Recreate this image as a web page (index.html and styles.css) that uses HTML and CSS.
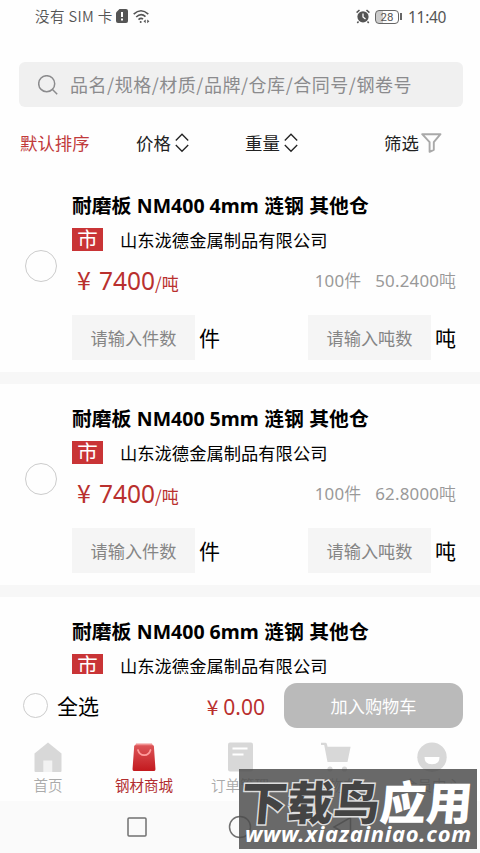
FILE: index.html
```html
<!DOCTYPE html>
<html lang="zh-CN">
<head>
<meta charset="utf-8">
<title>钢材商城</title>
<link rel="stylesheet" href="styles.css">
</head>
<body>
<div class="screen">
  <header class="status">
    <span class="sim">没有 SIM 卡</span>
    <svg class="sim-icon" width="12" height="16" viewBox="0 0 12 16"><path fill="#555" d="M3.500 1H10a2 2 0 0 1 2 2v10a2 2 0 0 1-2 2H2a2 2 0 0 1-2-2V4.500z"/><path stroke="#fff" stroke-width="2" d="M6 4v5M6 10.500v2"/></svg>
    <svg class="wifi" width="17" height="16" viewBox="0 0 17 16" fill="none" stroke="#555" stroke-width="1.600"><path d="M.7 5.200Q8 -1.700 15.300 5.200M3.200 8Q8 3.600 12.500 7.600M5.500 10.600Q8 8.400 10 10.200"/><circle cx="7.700" cy="13" r="1" fill="#555" stroke="none"/><path fill="#555" stroke="none" d="M10.500 12.300l2.200-1.900v3.800zM16.400 12.300l-2.200-1.900v3.800z"/></svg>
    <span class="grow"></span>
    <svg class="alarm" width="14" height="15" viewBox="0 0 14 15"><circle cx="7" cy="7.800" r="5.600" fill="#555"/><path fill="none" stroke="#555" stroke-width="1.500" d="M.6 3.600L3.500 1M13.400 3.600L10.500 1M2.500 12.500L1.300 14M11.500 12.500l1.200 1.500"/><path fill="none" stroke="#fff" stroke-width="1.300" d="M7 4.500V8l2.500 2"/></svg>
    <span class="battery">28</span>
    <span class="battery-tip"></span>
    <span class="clock">11:40</span>
  </header>

  <div class="search">
    <svg width="20" height="20" viewBox="0 0 20 20" fill="none" stroke="#8b8b8d" stroke-width="1.500"><circle cx="8.700" cy="8.700" r="8"/><path d="M14.500 14.500l4.700 4.700"/></svg>
    <span class="placeholder">品名/规格/材质/品牌/仓库/合同号/钢卷号</span>
  </div>

  <nav class="filters">
    <span class="sort active">默认排序</span>
    <span class="sort price-sort">价格<svg width="14" height="20" viewBox="0 0 14 20" fill="none" stroke="#222" stroke-width="1.300"><path d="M.8 7.500L7 1.200l6.200 6.300M.8 12L7 18.300l6.200-6.300"/></svg></span>
    <span class="sort weight-sort">重量<svg width="14" height="20" viewBox="0 0 14 20" fill="none" stroke="#222" stroke-width="1.300"><path d="M.8 7.500L7 1.200l6.200 6.300M.8 12L7 18.300l6.200-6.300"/></svg></span>
    <span class="sort pick">筛选<svg width="21" height="20" viewBox="0 0 21 20" fill="none" stroke="#a9a9a9" stroke-width="1.900" stroke-linejoin="round"><path d="M1.200 1.200h18.300l-6.700 8v7.600l-4.200 2V9.200z"/></svg></span>
  </nav>

  <main class="list">
    <article class="card">
      <span class="radio"></span>
      <div class="body">
        <h2>耐磨板 <b>NM400 4mm</b> 涟钢 其他仓</h2>
        <div class="seller"><span class="tag">市</span><span>山东泷德金属制品有限公司</span></div>
        <div class="money"><span class="yen">¥</span><span class="num">7400</span><span class="unit">/吨</span><span class="stock"><i>100</i>件</span><span class="weight"><i>50.2400</i>吨</span></div>
        <div class="inputs"><span class="field">请输入件数</span><span class="suffix">件</span><span class="field second">请输入吨数</span><span class="suffix">吨</span></div>
      </div>
    </article>
    <article class="card">
      <span class="radio"></span>
      <div class="body">
        <h2>耐磨板 <b>NM400 5mm</b> 涟钢 其他仓</h2>
        <div class="seller"><span class="tag">市</span><span>山东泷德金属制品有限公司</span></div>
        <div class="money"><span class="yen">¥</span><span class="num">7400</span><span class="unit">/吨</span><span class="stock"><i>100</i>件</span><span class="weight"><i>62.8000</i>吨</span></div>
        <div class="inputs"><span class="field">请输入件数</span><span class="suffix">件</span><span class="field second">请输入吨数</span><span class="suffix">吨</span></div>
      </div>
    </article>
    <article class="card">
      <div class="body last">
        <h2>耐磨板 <b>NM400 6mm</b> 涟钢 其他仓</h2>
        <div class="seller"><span class="tag">市</span><span>山东泷德金属制品有限公司</span></div>
      </div>
    </article>
  </main>

  <section class="checkout">
    <span class="radio small"></span>
    <span class="all">全选</span>
    <span class="total"><span class="total-yen">¥</span>0.00</span>
    <span class="cart-button">加入购物车</span>
  </section>

  <nav class="tabs">
    <span class="tab"><svg width="30" height="30" viewBox="0 0 30 30"><path fill="#d8d8d8" d="M15 .5L28.500 11.500V29a1 1 0 0 1-1 1h-25a1 1 0 0 1-1-1V11.500z"/><path fill="#f2f2f2" d="M10.300 18.500h9V30h-9z"/></svg>首页</span>
    <span class="tab on"><svg width="30" height="30" viewBox="0 0 30 30"><defs><linearGradient id="bag" x1="0" y1="0" x2="0" y2="1"><stop offset="0" stop-color="#dc5558"/><stop offset="1" stop-color="#c3191e"/></linearGradient></defs><path fill="#f08e8e" d="M6.500 .5h17l2 4H4.500z"/><path fill="url(#bag)" d="M5.500 2.500h19q1 0 1.100 1L27.300 28q0 2-2 2H4.700q-2 0-2-2L4.500 3.500q0-1 1-1z"/><path fill="none" stroke="#ff9c9c" stroke-width="1.900" stroke-linecap="round" d="M8.500 7.500q1.700 5.500 6.800 5.500T22 7.500"/></svg>钢材商城</span>
    <span class="tab"><svg width="30" height="30" viewBox="0 0 30 30"><rect x="3" y=".5" width="25" height="29" rx="2" fill="#d8d8d8"/><path stroke="#fff" stroke-width="2" d="M7.500 6.500h15M7.500 12.500h11"/></svg>订单管理</span>
    <span class="tab"><svg width="30" height="30" viewBox="0 0 30 30"><path fill="#d8d8d8" d="M0 .8h4.500q1 0 1.300 1l.8 3h23L26.500 20h-20L3.200 3H0z"/><circle cx="9" cy="27" r="2.600" fill="#d8d8d8"/><circle cx="23.500" cy="27" r="2.600" fill="#d8d8d8"/></svg>购物车</span>
    <span class="tab"><svg width="30" height="30" viewBox="0 0 30 30"><circle cx="15" cy="15.200" r="14.700" fill="#d8d8d8"/><path fill="#fff" d="M7.500 15h15q0 7.300-7.500 7.300T7.500 15z"/></svg>会员中心</span>
  </nav>

  <footer class="system">
    <svg width="22" height="22" viewBox="0 0 22 22"><rect x="2" y="2" width="18" height="18" rx="1" /></svg>
    <svg width="24" height="24" viewBox="0 0 24 24"><circle cx="12" cy="12" r="10.500"/></svg>
    <svg width="22" height="22" viewBox="0 0 22 22"><path d="M18.500 1.500v19L2 11z"/></svg>
  </footer>

  <aside class="watermark">
    <div class="brand"><span class="dark">下载鸟</span><span class="light">应用</span></div>
    <div class="site">www.xiazainiao.com</div>
  </aside>
</div>
</body>
</html>
```
FILE: styles.css
```css
* { box-sizing: border-box; }
body { margin: 0; background: #fefefe; font-family: "Noto Sans CJK SC", sans-serif; color: #000; }
i { font-style: normal; }
svg { display: block; flex: none; }
.screen { position: relative; width: 480px; height: 853px; overflow: hidden; display: flex; flex-direction: column; white-space: nowrap; }
.grow { flex: 1; }

.status { height: 33px; padding: 0 34px 0 35px; display: flex; align-items: center; color: #555; flex: none; }
.sim { width: 81px; font-size: 14.600px; font-weight: 350; letter-spacing: .35px; line-height: 20px; margin-top: -2px; }
.sim-icon { margin-top: -2px; }
.wifi { margin-left: 5px; }
.alarm { margin-right: 5px; margin-left: -1px; }
.battery { width: 24px; height: 14px; border: 1.500px solid #666; border-radius: 4px; font: 11.500px/12px Roboto, sans-serif; text-align: center; background: linear-gradient(90deg, #ccc 30%, transparent 30%); }
.battery-tip { width: 2px; height: 7px; background: #666; margin: 0 6px 0 1px; }
.clock { font: 15.500px/20px "Noto Sans", sans-serif; width: 38px; letter-spacing: -.3px; }

.search { flex: none; margin: 29px 17px 0 19px; height: 45px; border-radius: 6px; background: #f0f0f0; display: flex; align-items: center; padding-left: 19px; color: #8b8b8d; }
.placeholder { margin-left: 12px; margin-top: -1px; font-size: 18px; font-weight: 400; letter-spacing: .53px; }

.filters { flex: none; height: 72px; display: grid; grid-template-columns: 115px 109px 140px 1fr; padding-left: 20px; align-items: center; font-size: 17.400px; line-height: 24px; color: #222; }
.sort { display: flex; align-items: center; }
.active { color: #c13a3b; }
.price-sort, .weight-sort { gap: 4px; padding-left: 1px; }
.pick svg { margin-left: 2px; }

.list { flex: none; height: 495px; overflow: hidden; }
.card { height: 193px; display: flex; padding-left: 25px; }
.card + .card { height: 213px; border-top: 12px solid #f7f7f7; }
.radio { width: 32px; height: 32px; border: 1.500px solid #ccc; border-radius: 50%; flex: none; margin-top: 71px; }
.card + .card .radio { margin-top: 79px; }
.body { width: 384px; margin-left: 15px; padding-top: 11px; }
.card + .card .body { padding-top: 19px; }
.card + .card .last { margin-left: 47px; }
h2 { margin: 0; height: 30px; line-height: 30px; font-size: 19.800px; font-weight: 700; word-spacing: 1px; }
h2 b { font-family: "Noto Sans", sans-serif; font-weight: 700; font-size: 19.500px; word-spacing: 0; }
.seller { display: flex; height: 25px; margin-top: 8px; line-height: 23px; font-size: 17.250px; letter-spacing: .04px; }
.tag { width: 31px; height: 23px; line-height: 21px; background: #c93436; color: #fff; text-align: center; margin-right: 17px; font-size: 20.500px; }
.money { display: flex; height: 36px; margin-top: 8px; align-items: baseline; line-height: 36px; color: #b9302e; }
.yen { width: 27px; padding-left: 5px; font-size: 25px; }
.num { font-family: "Noto Sans", sans-serif; font-size: 24.500px; }
.unit { font-size: 17px; }
.stock { margin-left: auto; }
.stock, .weight { position: relative; top: -3px; color: #999; font-size: 16.900px; font-weight: 350; }
.stock i, .weight i { font-family: "Noto Sans", sans-serif; font-weight: 400; letter-spacing: .2px; }
.weight { margin-left: 14px; }
.inputs { display: flex; align-items: center; height: 45px; margin-top: 18px; }
.field { width: 123px; height: 45px; background: #f5f5f5; color: #858585; text-align: center; line-height: 45px; font-size: 17.200px; font-weight: 400; }
.second { margin-left: auto; }
.suffix { font-size: 21px; margin-left: 4px; line-height: 45px; }

.checkout { flex: none; height: 63px; padding: 0 17px 0 23px; display: flex; align-items: center; }
.small { width: 25px; height: 25px; margin: 0; border-width: 1px; }
.all { margin-left: 9px; margin-top: -1px; font-size: 21px; }
.total { margin-left: auto; color: #b9302e; font: 21px "Noto Sans", sans-serif; }
.total-yen { font-family: "Noto Sans CJK SC"; margin-right: 5px; }
.cart-button { margin-left: 19px; width: 179px; height: 45px; margin-top: -1px; line-height: 45px; border-radius: 13px; background: #bababa; color: #fff; text-align: center; font-size: 17.200px; }

.tabs { flex: none; height: 64px; padding-top: 5px; display: grid; grid-template-columns: repeat(5, 96px); }
.tab { display: flex; flex-direction: column; align-items: center; color: #aaa; font-size: 14.500px; line-height: 26px; font-weight: 350; }
.on { color: #b22d30; font-weight: 400; }
.on svg { width: 28px; }
.system { flex: 1; background: #fafafa; display: flex; align-items: center; padding-left: 126px; gap: 80px; }
.system svg { fill: none; stroke: #707070; stroke-width: 1.500; }

.watermark { position: absolute; left: 239px; top: 769px; width: 238px; height: 80px; background: rgba(76, 76, 76, .84); color: #fff; }
.brand { height: 51px; line-height: 63px; font-size: 46px; font-weight: 900; padding-left: 3px; transform: skewX(-5deg); letter-spacing: .3px; }
.dark { color: #444; -webkit-text-stroke: 3px #ddd; paint-order: stroke fill; }
.site { font: italic 700 22px/26px "Noto Sans", sans-serif; padding-left: 6px; letter-spacing: .7px; }
```
